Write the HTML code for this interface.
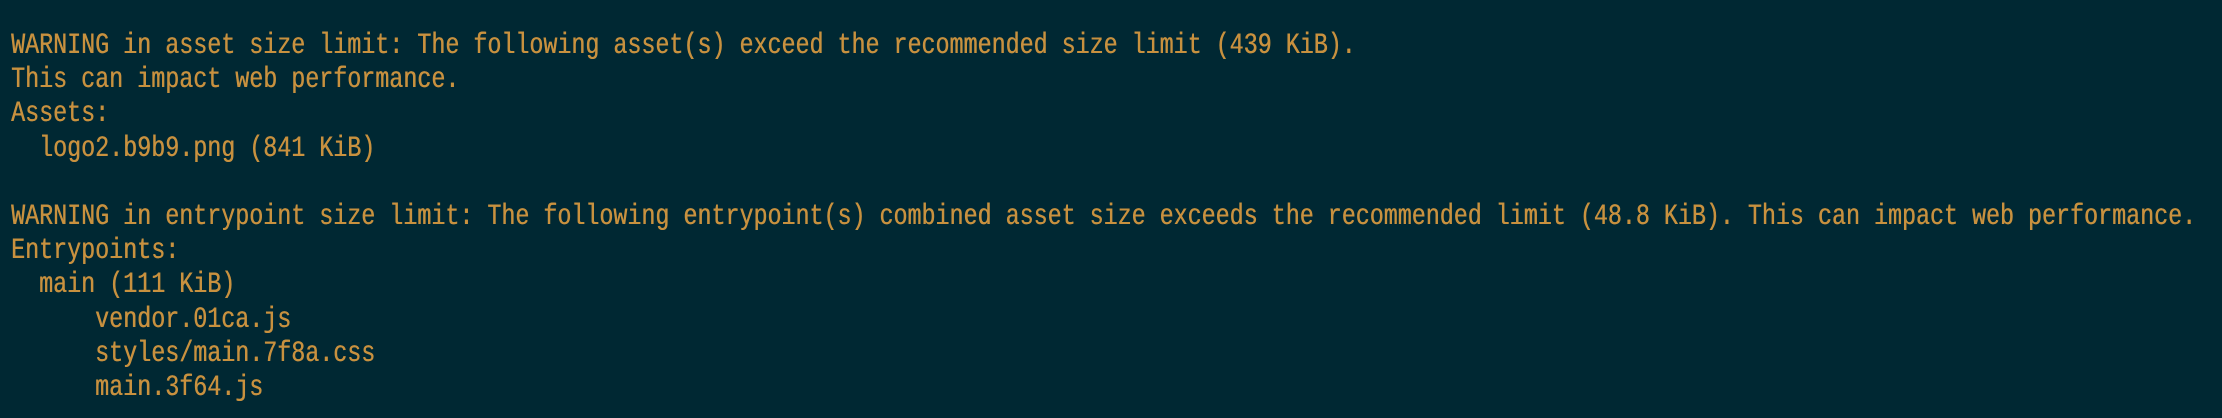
<!DOCTYPE html>
<html><head><meta charset="utf-8"><style>
html,body{margin:0;padding:0;background:#002833;width:2222px;height:418px;overflow:hidden}
pre{position:absolute;left:11px;top:29px;margin:0;font-family:"Liberation Mono",monospace;font-size:30px;line-height:34.2px;color:#c8913f;transform:scaleX(0.778);transform-origin:0 0;white-space:pre;text-shadow:0.5px 0 0 #c8913f}
</style></head><body>
<pre>WARNING in asset size limit: The following asset(s) exceed the recommended size limit (439 KiB).
This can impact web performance.
Assets:
  logo2.b9b9.png (841 KiB)

WARNING in entrypoint size limit: The following entrypoint(s) combined asset size exceeds the recommended limit (48.8 KiB). This can impact web performance.
Entrypoints:
  main (111 KiB)
      vendor.01ca.js
      styles/main.7f8a.css
      main.3f64.js</pre>
</body></html>
